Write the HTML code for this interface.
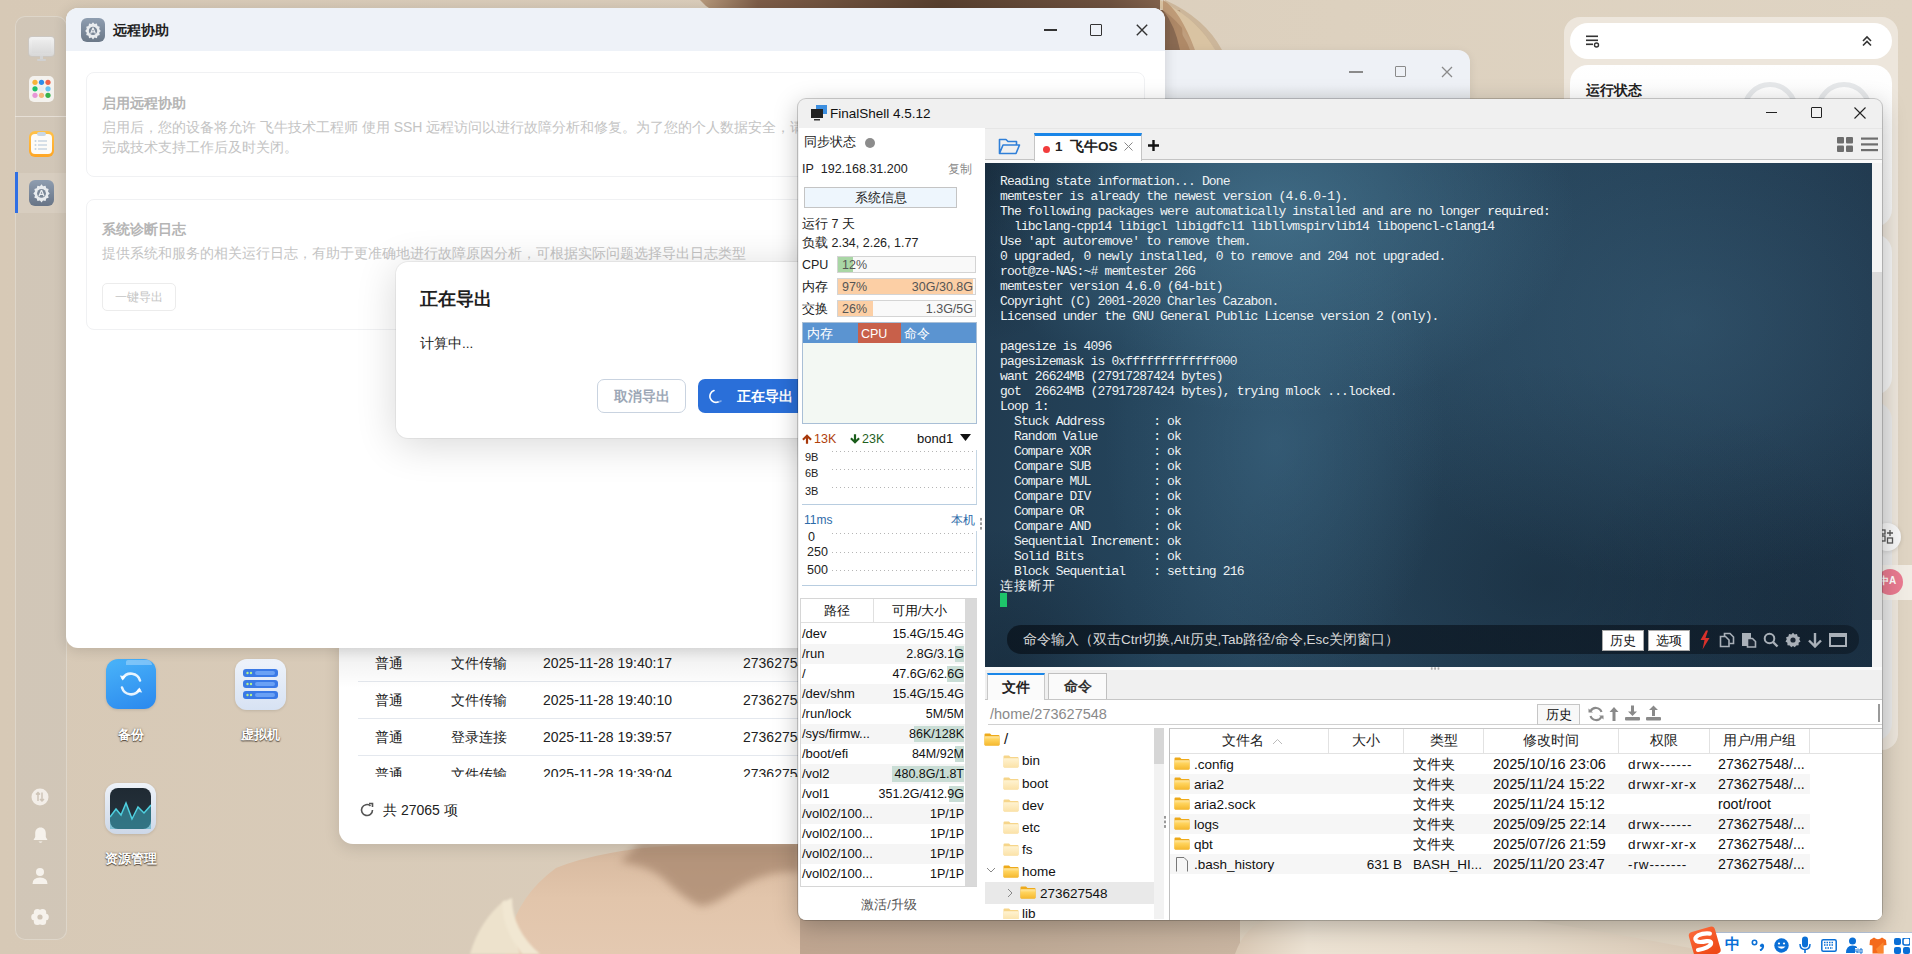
<!DOCTYPE html>
<html><head><meta charset="utf-8">
<style>
*{box-sizing:border-box}
html,body{margin:0;padding:0}
body{width:1912px;height:954px;overflow:hidden;position:relative;background:#d9cdbb;font-family:"Liberation Sans",sans-serif;color:#222}
.a{position:absolute}
.mono{font-family:"Liberation Mono",monospace}
</style></head><body>

<svg width="0" height="0" style="position:absolute"><defs>
<linearGradient id="fgF" x1="0" y1="0" x2="0" y2="1"><stop offset="0" stop-color="#ffe9a6"/><stop offset="0.35" stop-color="#ffd35c"/><stop offset="1" stop-color="#f5b82e"/></linearGradient>
<linearGradient id="fgL" x1="0" y1="0" x2="0" y2="1"><stop offset="0" stop-color="#fff3d2"/><stop offset="1" stop-color="#fbe2a8"/></linearGradient>
</defs></svg>
<!-- wallpaper -->
<div class="a" id="wp" style="left:0;top:0;width:1912px;height:954px;background:linear-gradient(90deg,#d7c9b6 0%,#dacdbb 40%,#ddd1bf 70%,#dfd4c3 100%)"></div>
<svg class="a" style="left:650px;top:0" width="620" height="60" viewBox="650 0 620 60">
<defs><linearGradient id="hr" x1="0" y1="0" x2="1" y2="0"><stop offset="0" stop-color="#b79a7c"/><stop offset="0.12" stop-color="#7d5d48"/><stop offset="0.5" stop-color="#58402f"/><stop offset="0.85" stop-color="#6e5240"/><stop offset="1" stop-color="#8a6a52"/></linearGradient></defs>
<path d="M700 0 Q705 6 712 10 L1180 10 Q1185 40 1180 55 H1160 V0 Z" fill="url(#hr)"/>
<path d="M1160 0 Q1200 20 1215 50 L1195 50 Q1185 25 1160 8 Z" fill="#d9c3a2"/>
<path d="M1165 0 Q1205 18 1222 50 L1215 50 Q1198 20 1165 3 Z" fill="#c4ab8a" opacity="0.7"/>
<path d="M1170 20 Q1185 35 1190 50 L1170 50 Z" fill="#8a6a52"/>
<path d="M1163 0 Q1180 10 1195 50 L1180 50 Q1175 25 1163 10 Z" fill="#b8916d" opacity="0.8"/>
</svg>
<!-- shoulder -->
<svg class="a" style="left:0;top:820px" width="1912" height="134" viewBox="0 820 1912 134">
<defs>
<linearGradient id="sk" x1="0" y1="0" x2="0" y2="1"><stop offset="0" stop-color="#d6b89e"/><stop offset="0.5" stop-color="#e2c5ab"/><stop offset="1" stop-color="#e4c9b1"/></linearGradient>
<linearGradient id="sk2" x1="0" y1="0" x2="1" y2="0"><stop offset="0" stop-color="#bfa590"/><stop offset="0.5" stop-color="#bea995"/><stop offset="1" stop-color="#c9b5a1"/></linearGradient>
<linearGradient id="cr" x1="0" y1="0" x2="1" y2="0"><stop offset="0" stop-color="#d9c8b4"/><stop offset="0.15" stop-color="#ece2d3"/><stop offset="0.6" stop-color="#e6dac9"/><stop offset="1" stop-color="#d8c8b5"/></linearGradient>
<filter id="bl" x="-20%" y="-50%" width="140%" height="200%"><feGaussianBlur stdDeviation="4"/></filter>
<filter id="bl2"><feGaussianBlur stdDeviation="1.2"/></filter>
</defs>
<path d="M505 954 Q512 900 556 868 Q600 850 680 845 L800 843 V954 Z" fill="url(#sk)"/>
<path d="M640 843 H800 V872 Q770 868 735 890 Q712 906 700 906 Q685 900 665 880 Q650 866 620 862 Z" fill="#a8876e" opacity="0.75" filter="url(#bl)"/>
<path d="M470 954 Q480 920 505 900 Q512 920 520 954 Z" fill="#ede2cc" filter="url(#bl2)"/>
<path d="M503 902 Q500 925 522 954 L540 954 Q512 930 512 898 Z" fill="#f1e7d2" filter="url(#bl2)"/>
<path d="M800 919 H1240 V954 H800 Z" fill="url(#sk2)"/>
<path d="M1235 954 Q1245 925 1270 919 L1520 919 Q1600 930 1720 954 Z" fill="url(#cr)"/>
</svg>

<!-- dock -->
<div class="a" id="dock" style="left:15px;top:16px;width:52px;height:924px;border-radius:10px;background:rgba(208,198,184,0.8);box-shadow:inset 0 0 0 1px rgba(238,232,224,0.45)"></div>
<div class="a" style="left:15px;top:116px;width:51px;height:1px;background:rgba(240,234,226,0.7)"></div>
<div class="a" style="left:16px;top:173px;width:50px;height:40px;background:rgba(226,218,206,0.35)"></div>
<!-- monitor -->
<div class="a" style="left:29px;top:37px;width:25px;height:19px;border-radius:3px;background:linear-gradient(180deg,#f3f3f3,#d8d8d8);box-shadow:0 0 0 1px rgba(200,200,200,0.6)"></div>
<div class="a" style="left:32px;top:40px;width:19px;height:13px;background:linear-gradient(180deg,#ececec,#dadada)"></div>
<div class="a" style="left:40px;top:56px;width:3px;height:3px;background:#d4d4d4"></div>
<div class="a" style="left:37px;top:59px;width:9px;height:2px;border-radius:1px;background:#d0d0d0"></div>
<!-- app grid -->
<div class="a" style="left:29px;top:76px;width:25px;height:26px;border-radius:5px;background:#f4f2ee"></div>
<svg class="a" style="left:32px;top:79px" width="19" height="20" viewBox="0 0 19 20"><circle cx="3" cy="3.3" r="2.6" fill="#f8b43a"/><circle cx="9.5" cy="3.3" r="2.6" fill="#2d8ceb"/><circle cx="16" cy="3.3" r="2.6" fill="#f0624a"/><circle cx="3" cy="9.8" r="2.6" fill="#1fc06a"/><circle cx="9.5" cy="9.8" r="2.6" fill="#e6edf4"/><circle cx="16" cy="9.8" r="2.6" fill="#69c3f2"/><circle cx="3" cy="16.3" r="2.6" fill="#e795d6"/><circle cx="9.5" cy="16.3" r="2.6" fill="#f2b77a"/><circle cx="16" cy="16.3" r="2.6" fill="#37b14a"/></svg>
<!-- notes -->
<div class="a" style="left:29px;top:131px;width:25px;height:26px;border-radius:6px;background:linear-gradient(180deg,#ffc24a,#ffa624)"></div>
<div class="a" style="left:31px;top:134px;width:21px;height:20px;border-radius:4px;background:#fdfbf7"></div>
<div class="a" style="left:37px;top:132px;width:9px;height:4px;border-radius:2px;background:#c9d7e4"></div>
<svg class="a" style="left:34px;top:139px" width="15" height="12" viewBox="0 0 15 12"><circle cx="1.5" cy="2" r="1" fill="#c5d3e0"/><circle cx="1.5" cy="6" r="1" fill="#c5d3e0"/><circle cx="1.5" cy="10" r="1" fill="#c5d3e0"/><rect x="4" y="1.3" width="9" height="1.4" fill="#c5d3e0"/><rect x="4" y="5.3" width="9" height="1.4" fill="#c5d3e0"/><rect x="4" y="9.3" width="9" height="1.4" fill="#c5d3e0"/></svg>
<!-- settings active -->
<div class="a" style="left:15px;top:172px;width:3px;height:41px;background:#2f6fe4"></div>
<div class="a" style="left:29px;top:180px;width:25px;height:26px;border-radius:6px;background:linear-gradient(180deg,#8e9db0,#677486)"></div>
<svg class="a" style="left:31px;top:182px" width="21" height="21" viewBox="0 0 20 20"><path d="M10 2.2L11.5 4.1L13.9 3.5L14.5 5.9L16.8 6.7L16.2 9.1L17.8 10.9L16.2 12.7L16.8 15L14.5 15.8L13.9 18.2L11.5 17.6L10 19.5L8.5 17.6L6.1 18.2L5.5 15.8L3.2 15L3.8 12.7L2.2 10.9L3.8 9.1L3.2 6.7L5.5 5.9L6.1 3.5L8.5 4.1Z" fill="#e9ecef"/><circle cx="10" cy="10.9" r="4.2" fill="#7a8797"/><path d="M10 7.6L7.6 13.6M10 7.6L12.4 13.6M8.4 11.8H11.6" stroke="#e9ecef" stroke-width="1.2" fill="none"/></svg>
<!-- bottom dock icons -->
<svg class="a" style="left:31px;top:788px" width="18" height="18" viewBox="0 0 18 18"><circle cx="9" cy="9" r="8.5" fill="#f3eee8"/><path d="M7 4.5V13M5 6.5L7 4.5L9 6.5M11 4.5V13M9 11L11 13L13 11" stroke="#cfc5b8" stroke-width="1.5" fill="none"/></svg>
<svg class="a" style="left:32px;top:826px" width="17" height="19" viewBox="0 0 17 19"><path d="M8.5 1.5C5 1.5 3.2 4 3.2 7.5V11L1.5 14H15.5L13.8 11V7.5C13.8 4 12 1.5 8.5 1.5Z" fill="#f6f2ec"/><path d="M6.5 15.5Q8.5 18 10.5 15.5" fill="#f6f2ec"/></svg>
<svg class="a" style="left:32px;top:867px" width="16" height="18" viewBox="0 0 16 18"><circle cx="8" cy="5" r="4" fill="#f6f2ec"/><path d="M0.5 17Q0.5 10.5 8 10.5Q15.5 10.5 15.5 17Z" fill="#f6f2ec"/></svg>
<svg class="a" style="left:31px;top:908px" width="18" height="18" viewBox="0 0 18 18"><circle cx="14.20" cy="9.00" r="3.6" fill="#f6f2ec"/><circle cx="11.60" cy="13.50" r="3.6" fill="#f6f2ec"/><circle cx="6.40" cy="13.50" r="3.6" fill="#f6f2ec"/><circle cx="3.80" cy="9.00" r="3.6" fill="#f6f2ec"/><circle cx="6.40" cy="4.50" r="3.6" fill="#f6f2ec"/><circle cx="11.60" cy="4.50" r="3.6" fill="#f6f2ec"/><circle cx="9" cy="9" r="5.5" fill="#f6f2ec"/><circle cx="9" cy="9" r="2.6" fill="#d0c5b7"/></svg>

<!-- desktop icons -->
<div class="a" style="left:106px;top:659px;width:50px;height:50px;border-radius:12px;background:linear-gradient(160deg,#4ab4f9,#2a88ee);box-shadow:0 1px 3px rgba(0,0,0,0.12)"></div>
<div class="a" style="left:126px;top:660px;width:26px;height:5px;border-radius:3px 8px 0 0;background:rgba(255,255,255,0.3)"></div>
<svg class="a" style="left:116px;top:669px" width="30" height="30" viewBox="0 0 30 30"><path d="M24 11.5A9.5 9.5 0 0 0 6.8 9.2" fill="none" stroke="rgba(255,255,255,0.88)" stroke-width="2.6" stroke-linecap="round"/><path d="M6 18.5A9.5 9.5 0 0 0 23.2 20.8" fill="none" stroke="rgba(255,255,255,0.88)" stroke-width="2.6" stroke-linecap="round"/><path d="M3.8 6.5L6.5 11.5L10 7.2Z" fill="rgba(255,255,255,0.88)"/><path d="M26.2 23.5L23.5 18.5L20 22.8Z" fill="rgba(255,255,255,0.88)"/></svg>
<div class="a" style="left:100px;top:726px;width:61px;text-align:center;font-size:13px;line-height:18px;font-weight:bold;color:#fff;text-shadow:0 1px 1px rgba(40,30,20,0.7),0 0 2px rgba(40,30,20,0.55)">备份</div>

<div class="a" style="left:235px;top:659px;width:51px;height:51px;border-radius:12px;background:linear-gradient(180deg,#eef3fb,#d7e2f3);box-shadow:0 1px 3px rgba(0,0,0,0.12)"></div>
<svg class="a" style="left:242px;top:668px" width="37" height="32" viewBox="0 0 37 32"><rect x="1" y="1" width="35" height="8" rx="3" fill="#3a79e6"/><rect x="1" y="12" width="35" height="8" rx="3" fill="#3a79e6"/><rect x="1" y="23" width="35" height="8" rx="3" fill="#3a79e6"/><circle cx="5.5" cy="5" r="1.2" fill="#b7f28a"/><circle cx="9" cy="5" r="1.2" fill="#b7f28a"/><circle cx="5.5" cy="16" r="1.2" fill="#b7f28a"/><circle cx="9" cy="16" r="1.2" fill="#b7f28a"/><circle cx="5.5" cy="27" r="1.2" fill="#b7f28a"/><circle cx="9" cy="27" r="1.2" fill="#b7f28a"/><rect x="13" y="3" width="20" height="4" rx="2" fill="#6aa1f5"/><rect x="13" y="14" width="20" height="4" rx="2" fill="#6aa1f5"/><rect x="13" y="25" width="20" height="4" rx="2" fill="#6aa1f5"/></svg>
<div class="a" style="left:225px;top:726px;width:71px;text-align:center;font-size:13px;line-height:18px;font-weight:bold;color:#fff;text-shadow:0 1px 1px rgba(40,30,20,0.7),0 0 2px rgba(40,30,20,0.55)">虚拟机</div>

<div class="a" style="left:105px;top:783px;width:51px;height:51px;border-radius:12px;background:linear-gradient(180deg,#eef2f8,#cdd8e8);box-shadow:0 1px 3px rgba(0,0,0,0.12)"></div>
<div class="a" style="left:110px;top:788px;width:41px;height:41px;border-radius:8px;background:linear-gradient(180deg,#1f2a33,#27343e)"></div>
<svg class="a" style="left:110px;top:795px" width="41" height="34" viewBox="0 0 41 34"><path d="M0 22L6 14L11 20L16 8L22 24L28 12L34 18L41 10V34H0Z" fill="rgba(60,170,190,0.55)"/><path d="M0 22L6 14L11 20L16 8L22 24L28 12L34 18L41 10" fill="none" stroke="#4fd0e0" stroke-width="1.5"/></svg>
<div class="a" style="left:95px;top:850px;width:71px;text-align:center;font-size:13px;line-height:18px;font-weight:bold;color:#fff;text-shadow:0 1px 1px rgba(40,30,20,0.7),0 0 2px rgba(40,30,20,0.55)">资源管理</div>

<!-- widget panel -->
<div class="a" id="widget" style="left:1564px;top:17px;width:334px;height:733px;border-radius:16px;background:rgba(238,231,222,0.92)"></div>
<div class="a" style="left:1570px;top:23px;width:322px;height:36px;border-radius:18px;background:#fff"></div>
<svg class="a" style="left:1586px;top:35px" width="14" height="13" viewBox="0 0 14 13"><rect x="0" y="0.5" width="12" height="1.6" fill="#333"/><rect x="0" y="4.5" width="12" height="1.6" fill="#333"/><rect x="0" y="8.5" width="7" height="1.6" fill="#333"/><circle cx="10.5" cy="10" r="2" fill="none" stroke="#333" stroke-width="1.4"/></svg>
<svg class="a" style="left:1861px;top:35px" width="12" height="12" viewBox="0 0 12 12"><path d="M2 6L6 2L10 6M2 10.5L6 6.5L10 10.5" fill="none" stroke="#333" stroke-width="1.6"/></svg>
<div class="a" style="left:1570px;top:65px;width:322px;height:162px;border-radius:18px;background:linear-gradient(180deg,#fff,#f4f4f4)"></div>
<div class="a" style="left:1586px;top:81px;font-size:14px;line-height:18px;font-weight:bold;color:#222">运行状态</div>
<div class="a" style="left:1742px;top:82px;width:56px;height:56px;border-radius:50%;border:5px solid #e6e8ea"></div>
<div class="a" style="left:1816px;top:82px;width:56px;height:56px;border-radius:50%;border:5px solid #e6e8ea"></div>
<div class="a" style="left:1570px;top:234px;width:322px;height:161px;border-radius:18px;background:#f4f4f4"></div>
<div class="a" style="left:1570px;top:402px;width:322px;height:339px;border-radius:18px;background:#e9e9e9"></div>
<div class="a" style="left:1873px;top:523px;width:28px;height:28px;border-radius:50%;background:#f7f7f7;box-shadow:0 1px 4px rgba(0,0,0,0.12)"></div>
<svg class="a" style="left:1879px;top:529px" width="16" height="16" viewBox="0 0 16 16"><rect x="1" y="7" width="5" height="5" fill="none" stroke="#555" stroke-width="1.3"/><rect x="8.5" y="9" width="5" height="5" fill="none" stroke="#555" stroke-width="1.3"/><rect x="1" y="1" width="5" height="4" fill="none" stroke="#555" stroke-width="1.3"/><path d="M11 1V7M8 4H14" stroke="#555" stroke-width="1.3"/></svg>
<div class="a" style="left:1860px;top:565px;width:52px;height:35px;background:rgba(245,240,234,0.85)"></div>
<div class="a" style="left:1877px;top:569px;width:26px;height:26px;border-radius:50%;background:#e97a90"></div>
<div class="a" style="left:1879px;top:574px;font-size:10px;line-height:14px;color:#fff;font-weight:bold">中A</div>

<!-- back window -->
<div class="a" id="backwin" style="left:1100px;top:50px;width:370px;height:50px;border-radius:12px 12px 0 0;background:linear-gradient(180deg,#eef1f6 0%,#eef1f6 70%,#e3e6ea 100%);box-shadow:0 2px 10px rgba(0,0,0,0.08)"></div>
<div class="a" style="left:1349px;top:71px;width:14px;height:1.5px;background:#8a8a8a"></div>
<div class="a" style="left:1395px;top:66px;width:11px;height:11px;border:1.3px solid #8a8a8a;border-radius:1px"></div>
<svg class="a" style="left:1441px;top:66px" width="12" height="12" viewBox="0 0 12 12"><path d="M1 1L11 11M11 1L1 11" stroke="#8a8a8a" stroke-width="1.3"/></svg>

<!-- log window -->
<div class="a" id="logwin" style="left:339px;top:560px;width:520px;height:284px;border-radius:0 0 14px 14px;background:#fff;box-shadow:0 4px 16px rgba(0,0,0,0.12)"></div>
<div class="a" style="left:339px;top:648px;width:520px;height:129px;overflow:hidden">
<div class="a" style="left:36px;top:6px;font-size:14px;line-height:18px;color:#222">普通</div><div class="a" style="left:112px;top:6px;font-size:14px;line-height:18px;color:#222">文件传输</div><div class="a" style="left:204px;top:6px;font-size:14px;line-height:18px;color:#222">2025-11-28 19:40:17</div><div class="a" style="left:404px;top:6px;font-size:14px;line-height:18px;color:#222">27362754</div>
<div class="a" style="left:19px;top:33px;width:500px;height:1px;background:#e4e8ee"></div>
<div class="a" style="left:36px;top:43px;font-size:14px;line-height:18px;color:#222">普通</div><div class="a" style="left:112px;top:43px;font-size:14px;line-height:18px;color:#222">文件传输</div><div class="a" style="left:204px;top:43px;font-size:14px;line-height:18px;color:#222">2025-11-28 19:40:10</div><div class="a" style="left:404px;top:43px;font-size:14px;line-height:18px;color:#222">27362754</div>
<div class="a" style="left:19px;top:70px;width:500px;height:1px;background:#e4e8ee"></div>
<div class="a" style="left:36px;top:80px;font-size:14px;line-height:18px;color:#222">普通</div><div class="a" style="left:112px;top:80px;font-size:14px;line-height:18px;color:#222">登录连接</div><div class="a" style="left:204px;top:80px;font-size:14px;line-height:18px;color:#222">2025-11-28 19:39:57</div><div class="a" style="left:404px;top:80px;font-size:14px;line-height:18px;color:#222">27362754</div>
<div class="a" style="left:19px;top:107px;width:500px;height:1px;background:#e4e8ee"></div>
<div class="a" style="left:36px;top:117px;font-size:14px;line-height:18px;color:#222">普通</div><div class="a" style="left:112px;top:117px;font-size:14px;line-height:18px;color:#222">文件传输</div><div class="a" style="left:204px;top:117px;font-size:14px;line-height:18px;color:#222">2025-11-28 19:39:04</div><div class="a" style="left:404px;top:117px;font-size:14px;line-height:18px;color:#222">27362754</div>
</div>
<div class="a" style="left:339px;top:648px;width:520px;height:40px;background:linear-gradient(180deg,rgba(0,0,0,0.07),rgba(0,0,0,0) 100%)"></div>
<svg class="a" style="left:359px;top:802px" width="16" height="16" viewBox="0 0 16 16"><path d="M13.5 8A5.5 5.5 0 1 1 11.5 3.8" fill="none" stroke="#555" stroke-width="1.6"/><path d="M10 1.5L13.5 1.5L13.5 5" fill="none" stroke="#555" stroke-width="1.6"/></svg>
<div class="a" style="left:383px;top:801px;font-size:14px;line-height:18px;color:#222">共 27065 项</div>

<!-- remote assist window -->
<div class="a" id="remote" style="left:66px;top:8px;width:1099px;height:640px;border-radius:12px;background:#fff;overflow:hidden;box-shadow:0 2px 14px rgba(0,0,0,0.14)">
  <div class="a" style="left:0;top:0;width:100%;height:43px;background:#eef2f8"></div>
  <div class="a" style="left:15px;top:10px;width:24px;height:24px;border-radius:6px;background:linear-gradient(180deg,#8e9db0,#6b7888)"></div>
  <svg class="a" style="left:17px;top:12px" width="20" height="20" viewBox="0 0 20 20"><path d="M10 2.2L11.5 4.1L13.9 3.5L14.5 5.9L16.8 6.7L16.2 9.1L17.8 10.9L16.2 12.7L16.8 15L14.5 15.8L13.9 18.2L11.5 17.6L10 19.5L8.5 17.6L6.1 18.2L5.5 15.8L3.2 15L3.8 12.7L2.2 10.9L3.8 9.1L3.2 6.7L5.5 5.9L6.1 3.5L8.5 4.1Z" fill="#e9ecef"/><circle cx="10" cy="10.9" r="4.2" fill="#7a8797"/><path d="M10 7.6L7.6 13.6M10 7.6L12.4 13.6M8.4 11.8H11.6" stroke="#e9ecef" stroke-width="1.2" fill="none"/></svg>
  <div class="a" style="left:47px;top:13px;font-size:14px;line-height:18px;font-weight:bold;color:#222">远程协助</div>
  <div class="a" style="left:978px;top:21px;width:13px;height:1.5px;background:#333"></div>
  <div class="a" style="left:1024px;top:16px;width:12px;height:12px;border:1.4px solid #333;border-radius:1px"></div>
  <svg class="a" style="left:1070px;top:16px" width="12" height="12" viewBox="0 0 12 12"><path d="M0.8 0.8L11.2 11.2M11.2 0.8L0.8 11.2" stroke="#333" stroke-width="1.4"/></svg>

  <div class="a" style="left:20px;top:64px;width:1059px;height:105px;border:1px solid #f0f1f3;border-radius:8px"></div>
  <div class="a" style="left:36px;top:86px;font-size:14px;line-height:18px;font-weight:bold;color:#b5b5b5">启用远程协助</div>
  <div class="a" style="left:36px;top:109px;font-size:14px;line-height:20px;color:#c4c4c4;width:1040px">启用后，您的设备将允许 飞牛技术工程师 使用 SSH 远程访问以进行故障分析和修复。为了您的个人数据安全，请在技术支持工作结束后及时关闭远程协助功能，并在<br>完成技术支持工作后及时关闭。</div>
  <div class="a" style="left:20px;top:191px;width:1059px;height:131px;border:1px solid #f0f1f3;border-radius:8px"></div>
  <div class="a" style="left:36px;top:212px;font-size:14px;line-height:18px;font-weight:bold;color:#b5b5b5">系统诊断日志</div>
  <div class="a" style="left:36px;top:235px;font-size:14px;line-height:20px;color:#c4c4c4">提供系统和服务的相关运行日志，有助于更准确地进行故障原因分析，可根据实际问题选择导出日志类型</div>
  <div class="a" style="left:36px;top:275px;width:74px;height:28px;border:1px solid #ececec;border-radius:5px;font-size:12px;line-height:26px;text-align:center;color:#c4c4c4">一键导出</div>
</div>

<!-- modal -->
<div class="a" style="left:396px;top:262px;width:520px;height:176px;border-radius:12px;background:#fff;box-shadow:0 6px 40px rgba(0,0,0,0.16),0 0 0 1px rgba(0,0,0,0.05)"></div>
<div class="a" style="left:420px;top:288px;font-size:18px;line-height:22px;font-weight:bold;color:#1f1f1f">正在导出</div>
<div class="a" style="left:420px;top:335px;font-size:13.5px;line-height:18px;color:#222">计算中...</div>
<div class="a" style="left:597px;top:379px;width:89px;height:34px;border:1px solid #c9d3e0;border-radius:7px;font-size:14px;line-height:32px;text-align:center;font-weight:bold;color:#9ca7b6">取消导出</div>
<div class="a" style="left:698px;top:379px;width:120px;height:34px;border-radius:7px;background:#2a6fd9"></div>
<svg class="a" style="left:709px;top:388px" width="16" height="16" viewBox="0 0 16 16"><path d="M5 2.5A6 6 0 0 0 9 14" fill="none" stroke="#fff" stroke-width="1.6" stroke-linecap="round"/><path d="M9 14A6 6 0 0 0 12 13" fill="none" stroke="rgba(255,255,255,0.4)" stroke-width="1.6" stroke-linecap="round"/></svg>
<div class="a" style="left:737px;top:387px;font-size:14px;line-height:18px;font-weight:bold;color:#fff">正在导出</div>

<!-- FinalShell -->
<div class="a" id="fs" style="left:798px;top:99px;width:1084px;height:821px;border-radius:8px;background:#f0f0f0;overflow:hidden;box-shadow:0 0 0 1px rgba(0,0,0,0.18),0 6px 24px rgba(0,0,0,0.25)"></div>
<div class="a" style="left:810px;top:105px;width:18px;height:16px">
  <svg width="18" height="16" viewBox="0 0 18 16"><rect x="6" y="0" width="11" height="9" fill="#3d8fe0"/><rect x="1" y="4" width="12" height="9" fill="#222"/><rect x="4" y="14" width="6" height="1.5" fill="#333"/></svg>
</div>
<div class="a" style="left:830px;top:106px;font-size:13.5px;line-height:16px;color:#111">FinalShell 4.5.12</div>
<div class="a" style="left:1766px;top:112px;width:11px;height:1px;background:#222"></div>
<div class="a" style="left:1811px;top:107px;width:11px;height:11px;border:1px solid #222;border-radius:1px"></div>
<svg class="a" style="left:1854px;top:107px" width="12" height="12" viewBox="0 0 12 12"><path d="M0.5 0.5L11.5 11.5M11.5 0.5L0.5 11.5" stroke="#222" stroke-width="1.1"/></svg>

<!-- left panel -->
<div class="a" style="left:799px;top:128px;width:186px;height:792px;background:#fff;border-bottom-left-radius:7px"></div>
<div class="a" style="left:804px;top:134px;font-size:13px;line-height:16px">同步状态</div>
<div class="a" style="left:865px;top:138px;width:10px;height:10px;border-radius:50%;background:#8c8c8c"></div>
<div class="a" style="left:802px;top:161px;font-size:12.5px;line-height:16px">IP&nbsp; 192.168.31.200</div>
<div class="a" style="left:948px;top:161px;font-size:12px;line-height:16px;color:#8a8a8a">复制</div>
<div class="a" style="left:804px;top:187px;width:153px;height:21px;background:#eef6fd;border:1px solid #c4c4c4;font-size:13px;line-height:19px;text-align:center">系统信息</div>
<div class="a" style="left:802px;top:216px;font-size:12.5px;line-height:16px">运行 7 天</div>
<div class="a" style="left:802px;top:235px;font-size:12.5px;line-height:16px">负载 2.34, 2.26, 1.77</div>

<div class="a" style="left:802px;top:257px;font-size:12.5px;line-height:16px">CPU</div>
<div class="a" style="left:837px;top:256px;width:139px;height:17px;border:1px solid #d4d4d4;background:#f9f9f9"></div>
<div class="a" style="left:838px;top:257px;width:15px;height:15px;background:#a9d6a5"></div>
<div class="a" style="left:842px;top:257px;font-size:12.5px;line-height:17px;color:#555">12%</div>

<div class="a" style="left:802px;top:279px;font-size:12.5px;line-height:16px">内存</div>
<div class="a" style="left:837px;top:278px;width:139px;height:17px;border:1px solid #d4d4d4;background:#f9f9f9"></div>
<div class="a" style="left:838px;top:279px;width:135px;height:15px;background:#fccfa5"></div>
<div class="a" style="left:842px;top:279px;font-size:12.5px;line-height:17px;color:#555">97%</div>
<div class="a" style="left:837px;top:279px;width:136px;font-size:12.5px;line-height:17px;color:#555;text-align:right">30G/30.8G</div>

<div class="a" style="left:802px;top:301px;font-size:12.5px;line-height:16px">交换</div>
<div class="a" style="left:837px;top:300px;width:139px;height:17px;border:1px solid #d4d4d4;background:#f9f9f9"></div>
<div class="a" style="left:838px;top:301px;width:35px;height:15px;background:#fccfa5"></div>
<div class="a" style="left:842px;top:301px;font-size:12.5px;line-height:17px;color:#555">26%</div>
<div class="a" style="left:837px;top:301px;width:136px;font-size:12.5px;line-height:17px;color:#555;text-align:right">1.3G/5G</div>

<div class="a" style="left:802px;top:322px;width:175px;height:102px;border:1px solid #a9bfd6;background:#f3f8f3"></div>
<div class="a" style="left:803px;top:323px;width:173px;height:20px;background:#5b94d1"></div>
<div class="a" style="left:858px;top:323px;width:43px;height:20px;background:#c8604a"></div>
<div class="a" style="left:807px;top:324px;font-size:12.5px;line-height:20px;color:#fff">内存</div>
<div class="a" style="left:861px;top:324px;font-size:12.5px;line-height:20px;color:#fff">CPU</div>
<div class="a" style="left:904px;top:324px;font-size:12.5px;line-height:20px;color:#fff">命令</div>

<svg class="a" style="left:802px;top:434px" width="10" height="10" viewBox="0 0 10 10"><path d="M5 0.3L9.8 5.1L8.4 6.5L6.1 4.2V9.7H3.9V4.2L1.6 6.5L0.2 5.1Z" fill="#a8380a"/></svg>
<div class="a" style="left:814px;top:431px;font-size:12.5px;line-height:16px;color:#b0400c">13K</div>
<svg class="a" style="left:850px;top:434px" width="10" height="10" viewBox="0 0 10 10"><path d="M5 9.7L9.8 4.9L8.4 3.5L6.1 5.8V0.3H3.9V5.8L1.6 3.5L0.2 4.9Z" fill="#1a5c1a"/></svg>
<div class="a" style="left:862px;top:431px;font-size:12.5px;line-height:16px;color:#1f5f1f">23K</div>
<div class="a" style="left:917px;top:431px;font-size:13px;line-height:16px;color:#111">bond1</div>
<svg class="a" style="left:960px;top:434px" width="11" height="7" viewBox="0 0 11 7"><path d="M0 0H11L5.5 7Z" fill="#111"/></svg>

<div class="a" style="left:802px;top:450px;width:175px;height:55px;border-right:1px solid #c5d6e4;border-bottom:1px solid #b8cde0"></div>
<div class="a" style="left:832px;top:451px;width:142px;height:1px;background:repeating-linear-gradient(90deg,#b5b5b5 0,#b5b5b5 1px,transparent 1px,transparent 4px)"></div>
<div class="a" style="left:832px;top:469px;width:142px;height:1px;background:repeating-linear-gradient(90deg,#b5b5b5 0,#b5b5b5 1px,transparent 1px,transparent 4px)"></div>
<div class="a" style="left:832px;top:487px;width:142px;height:1px;background:repeating-linear-gradient(90deg,#b5b5b5 0,#b5b5b5 1px,transparent 1px,transparent 4px)"></div>
<div class="a" style="left:805px;top:450px;font-size:11px;line-height:14px;color:#222">9B</div>
<div class="a" style="left:805px;top:466px;font-size:11px;line-height:14px;color:#222">6B</div>
<div class="a" style="left:805px;top:484px;font-size:11px;line-height:14px;color:#222">3B</div>

<div class="a" style="left:804px;top:513px;font-size:12px;line-height:15px;color:#2c6aa8">11ms</div>
<div class="a" style="left:951px;top:513px;font-size:12px;line-height:15px;color:#2c6aa8">本机</div>
<div class="a" style="left:979px;top:517px;width:4px;height:14px;background:radial-gradient(circle,#9a9a9a 1.2px,transparent 1.5px) 0 0/4px 4.5px"></div>
<div class="a" style="left:802px;top:531px;width:175px;height:55px;border-right:1px solid #c5d6e4;border-bottom:1px solid #b8cde0"></div>
<div class="a" style="left:832px;top:533px;width:142px;height:1px;background:repeating-linear-gradient(90deg,#b5b5b5 0,#b5b5b5 1px,transparent 1px,transparent 4px)"></div>
<div class="a" style="left:832px;top:552px;width:142px;height:1px;background:repeating-linear-gradient(90deg,#b5b5b5 0,#b5b5b5 1px,transparent 1px,transparent 4px)"></div>
<div class="a" style="left:832px;top:570px;width:142px;height:1px;background:repeating-linear-gradient(90deg,#b5b5b5 0,#b5b5b5 1px,transparent 1px,transparent 4px)"></div>
<div class="a" style="left:808px;top:529px;font-size:12.5px;line-height:16px;color:#222">0</div>
<div class="a" style="left:807px;top:544px;font-size:12.5px;line-height:16px;color:#222">250</div>
<div class="a" style="left:807px;top:562px;font-size:12.5px;line-height:16px;color:#222">500</div>

<!-- tab bar -->
<div class="a" style="left:985px;top:128px;width:897px;height:1px;background:#e6e6e6"></div><div class="a" style="left:985px;top:159px;width:897px;height:1px;background:#c4c4c4"></div><div class="a" style="left:985px;top:160px;width:897px;height:3px;background:#fafafa"></div>
<svg class="a" style="left:998px;top:137px" width="23" height="18" viewBox="0 0 23 18"><path d="M1.5 16.5V2.5H8L10 4.5H18.5V7.5M1.5 16.5L5 8H21.5L18 16.5Z" fill="none" stroke="#2f7fd8" stroke-width="1.6" stroke-linejoin="round"/></svg>
<div class="a" style="left:1034px;top:133px;width:108px;height:28px;background:#fff;border:1px solid #c4c4c4;border-top:3px solid #1a86e8;border-bottom:none"></div>
<div class="a" style="left:1043px;top:146px;width:7px;height:7px;border-radius:50%;background:#f23c3c"></div>
<div class="a" style="left:1055px;top:138px;font-size:13.5px;line-height:18px;font-weight:bold;color:#222">1&nbsp; 飞牛OS</div>
<svg class="a" style="left:1124px;top:142px" width="9" height="9" viewBox="0 0 9 9"><path d="M0.5 0.5L8.5 8.5M8.5 0.5L0.5 8.5" stroke="#888" stroke-width="1"/></svg>
<svg class="a" style="left:1147px;top:139px" width="13" height="13" viewBox="0 0 13 13"><path d="M6.5 1V12M1 6.5H12" stroke="#111" stroke-width="2.4"/></svg>
<svg class="a" style="left:1837px;top:137px" width="16" height="15" viewBox="0 0 16 15"><rect x="0" y="0" width="7" height="6.5" rx="1" fill="#6e6e6e"/><rect x="9" y="0" width="7" height="6.5" rx="1" fill="#6e6e6e"/><rect x="0" y="8.5" width="7" height="6.5" rx="1" fill="#6e6e6e"/><rect x="9" y="8.5" width="7" height="6.5" rx="1" fill="#6e6e6e"/></svg>
<svg class="a" style="left:1861px;top:137px" width="17" height="15" viewBox="0 0 17 15"><rect x="0" y="0.5" width="17" height="2.2" fill="#6e6e6e"/><rect x="0" y="6.3" width="17" height="2.2" fill="#6e6e6e"/><rect x="0" y="12" width="17" height="2.2" fill="#6e6e6e"/></svg>

<!-- terminal -->
<div class="a" id="term" style="left:985px;top:163px;width:887px;height:504px;background:
radial-gradient(ellipse 300px 200px at 290px 50px,rgba(80,132,160,0.6),rgba(80,132,160,0) 100%),
radial-gradient(ellipse 170px 250px at 290px 280px,rgba(70,118,148,0.42),rgba(70,118,148,0) 100%),
radial-gradient(ellipse 340px 260px at 700px 160px,rgba(70,112,140,0.34),rgba(70,112,140,0) 100%),
radial-gradient(ellipse 320px 220px at 560px 420px,rgba(12,24,36,0.35),rgba(12,24,36,0) 100%),
radial-gradient(ellipse 260px 220px at 840px 460px,rgba(12,24,36,0.3),rgba(12,24,36,0) 100%),
radial-gradient(ellipse 140px 180px at 0px 0px,rgba(12,24,36,0.4),rgba(12,24,36,0) 100%),
radial-gradient(ellipse 160px 140px at 20px 504px,rgba(12,24,36,0.35),rgba(12,24,36,0) 100%),
linear-gradient(90deg,#213b50 0%,#24435a 16%,#28475e 45%,#233f55 75%,#1f374c 100%)"></div>
<pre class="a mono" style="left:1000px;top:174px;margin:0;font-size:13px;line-height:15px;letter-spacing:-0.84px;color:#eef2f4">Reading state information... Done
memtester is already the newest version (4.6.0-1).
The following packages were automatically installed and are no longer required:
  libclang-cpp14 libigcl libigdfcl1 libllvmspirvlib14 libopencl-clang14
Use &#x27;apt autoremove&#x27; to remove them.
0 upgraded, 0 newly installed, 0 to remove and 204 not upgraded.
root@ze-NAS:~# memtester 26G
memtester version 4.6.0 (64-bit)
Copyright (C) 2001-2020 Charles Cazabon.
Licensed under the GNU General Public License version 2 (only).

pagesize is 4096
pagesizemask is 0xfffffffffffff000
want 26624MB (27917287424 bytes)
got  26624MB (27917287424 bytes), trying mlock ...locked.
Loop 1:
  Stuck Address       : ok
  Random Value        : ok
  Compare XOR         : ok
  Compare SUB         : ok
  Compare MUL         : ok
  Compare DIV         : ok
  Compare OR          : ok
  Compare AND         : ok
  Sequential Increment: ok
  Solid Bits          : ok
  Block Sequential    : setting 216</pre>
<div class="a" style="left:1000px;top:578px;font-size:13px;line-height:15px;letter-spacing:1px;color:#eef2f4">连接断开</div>
<div class="a" style="left:1000px;top:593px;width:7px;height:14px;background:#1ec46a"></div>
<div class="a" style="left:1872px;top:163px;width:10px;height:504px;background:#f4f4f4"></div>
<div class="a" style="left:1872px;top:272px;width:10px;height:348px;background:#dadada"></div>

<!-- command bar -->
<div class="a" style="left:1007px;top:625px;width:852px;height:29px;border-radius:14px;background:linear-gradient(90deg,rgba(10,20,30,0.8),rgba(14,26,38,0.7))"></div>
<div class="a" style="left:1023px;top:632px;font-size:13.5px;line-height:16px;color:#d8d8d8;white-space:nowrap">命令输入（双击Ctrl切换,Alt历史,Tab路径/命令,Esc关闭窗口）</div>
<div class="a" style="left:1602px;top:630px;width:42px;height:21px;background:#fff;border:1px solid #aaa;font-size:13px;line-height:19px;text-align:center;color:#111">历史</div>
<div class="a" style="left:1648px;top:630px;width:42px;height:21px;background:#fff;border:1px solid #aaa;font-size:13px;line-height:19px;text-align:center;color:#111">选项</div>

<!-- cmd icons -->
<svg class="a" style="left:1699px;top:630px" width="12" height="20" viewBox="0 0 12 20"><path d="M7 0.5L1.5 10H5.5L3.5 19.5L10.5 8H6.5L9 0.5Z" fill="#d8312b"/></svg>
<svg class="a" style="left:1719px;top:632px" width="16" height="16" viewBox="0 0 16 16"><path d="M5.5 4.5V1.5H11L14.5 5V11.5H10.5" fill="none" stroke="#a9b0b8" stroke-width="1.6"/><path d="M1.5 4.5H6.5L10 8V14.5H1.5Z" fill="none" stroke="#a9b0b8" stroke-width="1.6"/></svg>
<svg class="a" style="left:1741px;top:632px" width="16" height="16" viewBox="0 0 16 16"><rect x="1" y="1" width="9" height="13" fill="#a9b0b8"/><path d="M6.5 6.5H11.5L14.5 9.5V15H6.5Z" fill="#1b2633" stroke="#a9b0b8" stroke-width="1.6"/></svg>
<svg class="a" style="left:1763px;top:632px" width="16" height="16" viewBox="0 0 16 16"><circle cx="6.5" cy="6.5" r="4.8" fill="none" stroke="#a9b0b8" stroke-width="2"/><path d="M10 10L14.5 14.5" stroke="#a9b0b8" stroke-width="2.4"/></svg>
<svg class="a" style="left:1785px;top:632px" width="16" height="16" viewBox="0 0 16 16"><path d="M8 0.8L9.6 2.6L12 2.1L12.6 4.4L14.9 5.2L14.3 7.5L15.5 9.4L13.6 10.8L13.6 13.2L11.2 13.4L9.8 15.3L8 14L6.2 15.3L4.8 13.4L2.4 13.2L2.4 10.8L0.5 9.4L1.7 7.5L1.1 5.2L3.4 4.4L4 2.1L6.4 2.6Z" fill="#a9b0b8"/><circle cx="8" cy="8" r="2.6" fill="#1b2633"/></svg>
<svg class="a" style="left:1807px;top:632px" width="16" height="16" viewBox="0 0 16 16"><path d="M8 1V14M2 8.5L8 14.5L14 8.5" fill="none" stroke="#a9b0b8" stroke-width="2.4"/></svg>
<svg class="a" style="left:1829px;top:632px" width="18" height="16" viewBox="0 0 18 16"><rect x="1" y="2" width="16" height="12" fill="none" stroke="#a9b0b8" stroke-width="2"/><rect x="1" y="2" width="16" height="3" fill="#a9b0b8"/></svg>

<!-- file manager -->
<div class="a" style="left:799px;top:667px;width:1083px;height:0"></div>
<div class="a" style="left:985px;top:667px;width:897px;height:3px;background:#fafafa"></div><div class="a" style="left:985px;top:670px;width:897px;height:30px;background:#f0f0f0"></div>
<div class="a" style="left:1430px;top:667px;width:10px;height:3px;background:radial-gradient(circle,#aaa 1px,transparent 1.3px) 0 0/3.4px 3px"></div>
<div class="a" style="left:985px;top:699px;width:897px;height:1px;background:#c6c6c6"></div>
<div class="a" style="left:987px;top:673px;width:58px;height:27px;background:#fbfbfb;border:1px solid #c8c8c8;border-top:2px solid #1a86e8;border-bottom:none;font-size:13.5px;line-height:26px;text-align:center;font-weight:bold;color:#222">文件</div>
<div class="a" style="left:1048px;top:673px;width:59px;height:26px;background:#fafafa;border:1px solid #c0c0c0;border-bottom:none;font-size:13.5px;line-height:26px;text-align:center;font-weight:bold;color:#333">命令</div>
<div class="a" style="left:985px;top:700px;width:897px;height:220px;background:#fff;border-bottom-right-radius:7px"></div>
<div class="a" style="left:990px;top:705px;font-size:14.5px;line-height:18px;color:#8a8a8a">/home/273627548</div>
<div class="a" style="left:988px;top:724px;width:894px;height:1px;background:#d0d0d0"></div>
<div class="a" style="left:1537px;top:704px;width:43px;height:21px;background:#f8f8f8;border:1px solid #c6c6c6;font-size:13px;line-height:19px;text-align:center;color:#111">历史</div>
<svg class="a" style="left:1588px;top:706px" width="16" height="16" viewBox="0 0 16 16"><path d="M13.5 6A6 6 0 0 0 2.6 5M2.5 10A6 6 0 0 0 13.4 11" fill="none" stroke="#8a8a8a" stroke-width="2.2"/><path d="M0.5 2.5L5 6.5H0.5Z M15.5 13.5L11 9.5H15.5Z" fill="#8a8a8a"/></svg>
<svg class="a" style="left:1608px;top:706px" width="12" height="16" viewBox="0 0 12 16"><path d="M6 1L1.5 6H4.5V15H7.5V6H10.5Z" fill="#8a8a8a"/></svg>
<svg class="a" style="left:1624px;top:705px" width="17" height="16" viewBox="0 0 17 16"><path d="M7 0.5H10V6.5H13L8.5 11L4 6.5H7Z" fill="#8a8a8a"/><rect x="1" y="12" width="15" height="3.5" rx="1" fill="#8a8a8a"/></svg>
<svg class="a" style="left:1645px;top:705px" width="17" height="16" viewBox="0 0 17 16"><path d="M8.5 0.5L13 5H10V11H7V5H4Z" fill="#8a8a8a"/><rect x="1" y="12" width="15" height="3.5" rx="1" fill="#8a8a8a"/></svg>
<div class="a" style="left:1878px;top:704px;width:2px;height:18px;background:#9a9a9a"></div>

<!-- tree -->
<div class="a" style="left:985px;top:882px;width:169px;height:22px;background:#e9e9e9"></div>
<div class="a" style="left:1154px;top:728px;width:10px;height:191px;background:#f2f2f2"></div>
<div class="a" style="left:1154px;top:728px;width:10px;height:36px;background:#d6d6d6"></div>
<div class="a" style="left:1163px;top:815px;width:4px;height:14px;background:radial-gradient(circle,#9a9a9a 1.1px,transparent 1.4px) 0 0/4px 4.6px"></div>
<svg class="a" style="left:984px;top:733px" width="16" height="13" viewBox="0 0 16 13"><path d="M0.5 1.5Q0.5 0.5 1.5 0.5H6L7.5 2H14.5Q15.5 2 15.5 3V11.5Q15.5 12.5 14.5 12.5H1.5Q0.5 12.5 0.5 11.5Z" fill="#eeaa1a"/><path d="M0.5 4Q0.5 3.2 1.5 3.2H14.5Q15.5 3.2 15.5 4V11.5Q15.5 12.5 14.5 12.5H1.5Q0.5 12.5 0.5 11.5Z" fill="url(#fgF)"/></svg>
<div class="a" style="left:1004px;top:730px;font-size:15px;line-height:18px;color:#111">/</div>
<svg class="a" style="left:1003px;top:755px" width="16" height="13" viewBox="0 0 16 13"><path d="M0.5 1.5Q0.5 0.5 1.5 0.5H6L7.5 2H14.5Q15.5 2 15.5 3V11.5Q15.5 12.5 14.5 12.5H1.5Q0.5 12.5 0.5 11.5Z" fill="#f6d58a"/><path d="M0.5 4Q0.5 3.2 1.5 3.2H14.5Q15.5 3.2 15.5 4V11.5Q15.5 12.5 14.5 12.5H1.5Q0.5 12.5 0.5 11.5Z" fill="url(#fgL)"/></svg><div class="a" style="left:1022px;top:753px;font-size:13.5px;line-height:16px;color:#111">bin</div><svg class="a" style="left:1003px;top:777px" width="16" height="13" viewBox="0 0 16 13"><path d="M0.5 1.5Q0.5 0.5 1.5 0.5H6L7.5 2H14.5Q15.5 2 15.5 3V11.5Q15.5 12.5 14.5 12.5H1.5Q0.5 12.5 0.5 11.5Z" fill="#f6d58a"/><path d="M0.5 4Q0.5 3.2 1.5 3.2H14.5Q15.5 3.2 15.5 4V11.5Q15.5 12.5 14.5 12.5H1.5Q0.5 12.5 0.5 11.5Z" fill="url(#fgL)"/></svg><div class="a" style="left:1022px;top:776px;font-size:13.5px;line-height:16px;color:#111">boot</div><svg class="a" style="left:1003px;top:799px" width="16" height="13" viewBox="0 0 16 13"><path d="M0.5 1.5Q0.5 0.5 1.5 0.5H6L7.5 2H14.5Q15.5 2 15.5 3V11.5Q15.5 12.5 14.5 12.5H1.5Q0.5 12.5 0.5 11.5Z" fill="#f6d58a"/><path d="M0.5 4Q0.5 3.2 1.5 3.2H14.5Q15.5 3.2 15.5 4V11.5Q15.5 12.5 14.5 12.5H1.5Q0.5 12.5 0.5 11.5Z" fill="url(#fgL)"/></svg><div class="a" style="left:1022px;top:798px;font-size:13.5px;line-height:16px;color:#111">dev</div><svg class="a" style="left:1003px;top:821px" width="16" height="13" viewBox="0 0 16 13"><path d="M0.5 1.5Q0.5 0.5 1.5 0.5H6L7.5 2H14.5Q15.5 2 15.5 3V11.5Q15.5 12.5 14.5 12.5H1.5Q0.5 12.5 0.5 11.5Z" fill="#f6d58a"/><path d="M0.5 4Q0.5 3.2 1.5 3.2H14.5Q15.5 3.2 15.5 4V11.5Q15.5 12.5 14.5 12.5H1.5Q0.5 12.5 0.5 11.5Z" fill="url(#fgL)"/></svg><div class="a" style="left:1022px;top:820px;font-size:13.5px;line-height:16px;color:#111">etc</div><svg class="a" style="left:1003px;top:843px" width="16" height="13" viewBox="0 0 16 13"><path d="M0.5 1.5Q0.5 0.5 1.5 0.5H6L7.5 2H14.5Q15.5 2 15.5 3V11.5Q15.5 12.5 14.5 12.5H1.5Q0.5 12.5 0.5 11.5Z" fill="#f6d58a"/><path d="M0.5 4Q0.5 3.2 1.5 3.2H14.5Q15.5 3.2 15.5 4V11.5Q15.5 12.5 14.5 12.5H1.5Q0.5 12.5 0.5 11.5Z" fill="url(#fgL)"/></svg><div class="a" style="left:1022px;top:842px;font-size:13.5px;line-height:16px;color:#111">fs</div>
<svg class="a" style="left:986px;top:867px" width="10" height="7" viewBox="0 0 10 7"><path d="M1 1L5 5L9 1" fill="none" stroke="#888" stroke-width="1"/></svg>
<svg class="a" style="left:1003px;top:865px" width="16" height="13" viewBox="0 0 16 13"><path d="M0.5 1.5Q0.5 0.5 1.5 0.5H6L7.5 2H14.5Q15.5 2 15.5 3V11.5Q15.5 12.5 14.5 12.5H1.5Q0.5 12.5 0.5 11.5Z" fill="#eeaa1a"/><path d="M0.5 4Q0.5 3.2 1.5 3.2H14.5Q15.5 3.2 15.5 4V11.5Q15.5 12.5 14.5 12.5H1.5Q0.5 12.5 0.5 11.5Z" fill="url(#fgF)"/></svg>
<div class="a" style="left:1022px;top:864px;font-size:13.5px;line-height:16px;color:#111">home</div>
<svg class="a" style="left:1007px;top:888px" width="7" height="10" viewBox="0 0 7 10"><path d="M1 1L5 5L1 9" fill="none" stroke="#888" stroke-width="1"/></svg>
<svg class="a" style="left:1020px;top:886px" width="16" height="13" viewBox="0 0 16 13"><path d="M0.5 1.5Q0.5 0.5 1.5 0.5H6L7.5 2H14.5Q15.5 2 15.5 3V11.5Q15.5 12.5 14.5 12.5H1.5Q0.5 12.5 0.5 11.5Z" fill="#eeaa1a"/><path d="M0.5 4Q0.5 3.2 1.5 3.2H14.5Q15.5 3.2 15.5 4V11.5Q15.5 12.5 14.5 12.5H1.5Q0.5 12.5 0.5 11.5Z" fill="url(#fgF)"/></svg>
<div class="a" style="left:1040px;top:886px;font-size:13.5px;line-height:16px;color:#111">273627548</div>
<div class="a" style="left:985px;top:904px;width:169px;height:15px;overflow:hidden"><svg style="position:absolute;left:18px;top:4px" width="16" height="13" viewBox="0 0 16 13"><path d="M0.5 1.5Q0.5 0.5 1.5 0.5H6L7.5 2H14.5Q15.5 2 15.5 3V11.5Q15.5 12.5 14.5 12.5H1.5Q0.5 12.5 0.5 11.5Z" fill="#f6d58a"/><path d="M0.5 4Q0.5 3.2 1.5 3.2H14.5Q15.5 3.2 15.5 4V11.5Q15.5 12.5 14.5 12.5H1.5Q0.5 12.5 0.5 11.5Z" fill="url(#fgL)"/></svg><div class="a" style="left:37px;top:2px;font-size:13.5px;line-height:16px;color:#111">lib</div></div>

<!-- list -->
<div class="a" style="left:1169px;top:728px;width:713px;height:192px;border-left:1px solid #bfbfbf;border-top:1px solid #c8c8c8;background:#fff;border-bottom-right-radius:7px"></div>
<div class="a" style="left:1170px;top:753px;width:712px;height:1px;background:#e2e2e2"></div>
<div class="a" style="left:1170px;top:729px;width:159px;height:24px;font-size:13.5px;line-height:24px;text-align:center;color:#222;border-right:1px solid #e2e2e2">文件名&nbsp;&nbsp;&nbsp;</div>
<div class="a" style="left:1329px;top:729px;width:75px;height:24px;font-size:13.5px;line-height:24px;text-align:center;color:#222;border-right:1px solid #e2e2e2">大小</div>
<div class="a" style="left:1404px;top:729px;width:80px;height:24px;font-size:13.5px;line-height:24px;text-align:center;color:#222;border-right:1px solid #e2e2e2">类型</div>
<div class="a" style="left:1484px;top:729px;width:135px;height:24px;font-size:13.5px;line-height:24px;text-align:center;color:#222;border-right:1px solid #e2e2e2">修改时间</div>
<div class="a" style="left:1619px;top:729px;width:91px;height:24px;font-size:13.5px;line-height:24px;text-align:center;color:#222;border-right:1px solid #e2e2e2">权限</div>
<div class="a" style="left:1710px;top:729px;width:100px;height:24px;font-size:13.5px;line-height:24px;text-align:center;color:#222;border-right:1px solid #e2e2e2">用户/用户组</div>
<svg class="a" style="left:1272px;top:738px" width="11" height="7" viewBox="0 0 11 7"><path d="M1 6L5.5 1.5L10 6" fill="none" stroke="#bbb" stroke-width="1"/></svg>
<svg class="a" style="left:1174px;top:757px" width="16" height="13" viewBox="0 0 16 13"><path d="M0.5 1.5Q0.5 0.5 1.5 0.5H6L7.5 2H14.5Q15.5 2 15.5 3V11.5Q15.5 12.5 14.5 12.5H1.5Q0.5 12.5 0.5 11.5Z" fill="#eeaa1a"/><path d="M0.5 4Q0.5 3.2 1.5 3.2H14.5Q15.5 3.2 15.5 4V11.5Q15.5 12.5 14.5 12.5H1.5Q0.5 12.5 0.5 11.5Z" fill="url(#fgF)"/></svg>
<div class="a" style="left:1194px;top:755px;font-size:13.5px;line-height:20px;color:#111">.config</div>
<div class="a" style="left:1413px;top:755px;font-size:13.5px;line-height:20px;color:#111">文件夹</div>
<div class="a" style="left:1493px;top:754px;font-size:14.5px;line-height:20px;color:#111">2025/10/16 23:06</div>
<div class="a" style="left:1628px;top:755px;font-size:13.5px;letter-spacing:0.9px;line-height:20px;color:#111">drwx------</div>
<div class="a" style="left:1718px;top:754px;font-size:14.2px;line-height:20px;color:#111">273627548/...</div>
<div class="a" style="left:1170px;top:774px;width:640px;height:20px;background:#f6f6f6"></div>
<svg class="a" style="left:1174px;top:777px" width="16" height="13" viewBox="0 0 16 13"><path d="M0.5 1.5Q0.5 0.5 1.5 0.5H6L7.5 2H14.5Q15.5 2 15.5 3V11.5Q15.5 12.5 14.5 12.5H1.5Q0.5 12.5 0.5 11.5Z" fill="#eeaa1a"/><path d="M0.5 4Q0.5 3.2 1.5 3.2H14.5Q15.5 3.2 15.5 4V11.5Q15.5 12.5 14.5 12.5H1.5Q0.5 12.5 0.5 11.5Z" fill="url(#fgF)"/></svg>
<div class="a" style="left:1194px;top:775px;font-size:13.5px;line-height:20px;color:#111">aria2</div>
<div class="a" style="left:1413px;top:775px;font-size:13.5px;line-height:20px;color:#111">文件夹</div>
<div class="a" style="left:1493px;top:774px;font-size:14.5px;line-height:20px;color:#111">2025/11/24 15:22</div>
<div class="a" style="left:1628px;top:775px;font-size:13.5px;letter-spacing:0.9px;line-height:20px;color:#111">drwxr-xr-x</div>
<div class="a" style="left:1718px;top:774px;font-size:14.2px;line-height:20px;color:#111">273627548/...</div>
<svg class="a" style="left:1174px;top:797px" width="16" height="13" viewBox="0 0 16 13"><path d="M0.5 1.5Q0.5 0.5 1.5 0.5H6L7.5 2H14.5Q15.5 2 15.5 3V11.5Q15.5 12.5 14.5 12.5H1.5Q0.5 12.5 0.5 11.5Z" fill="#eeaa1a"/><path d="M0.5 4Q0.5 3.2 1.5 3.2H14.5Q15.5 3.2 15.5 4V11.5Q15.5 12.5 14.5 12.5H1.5Q0.5 12.5 0.5 11.5Z" fill="url(#fgF)"/></svg>
<div class="a" style="left:1194px;top:795px;font-size:13.5px;line-height:20px;color:#111">aria2.sock</div>
<div class="a" style="left:1413px;top:795px;font-size:13.5px;line-height:20px;color:#111">文件夹</div>
<div class="a" style="left:1493px;top:794px;font-size:14.5px;line-height:20px;color:#111">2025/11/24 15:12</div>
<div class="a" style="left:1718px;top:794px;font-size:14.2px;line-height:20px;color:#111">root/root</div>
<div class="a" style="left:1170px;top:814px;width:640px;height:20px;background:#f6f6f6"></div>
<svg class="a" style="left:1174px;top:817px" width="16" height="13" viewBox="0 0 16 13"><path d="M0.5 1.5Q0.5 0.5 1.5 0.5H6L7.5 2H14.5Q15.5 2 15.5 3V11.5Q15.5 12.5 14.5 12.5H1.5Q0.5 12.5 0.5 11.5Z" fill="#eeaa1a"/><path d="M0.5 4Q0.5 3.2 1.5 3.2H14.5Q15.5 3.2 15.5 4V11.5Q15.5 12.5 14.5 12.5H1.5Q0.5 12.5 0.5 11.5Z" fill="url(#fgF)"/></svg>
<div class="a" style="left:1194px;top:815px;font-size:13.5px;line-height:20px;color:#111">logs</div>
<div class="a" style="left:1413px;top:815px;font-size:13.5px;line-height:20px;color:#111">文件夹</div>
<div class="a" style="left:1493px;top:814px;font-size:14.5px;line-height:20px;color:#111">2025/09/25 22:14</div>
<div class="a" style="left:1628px;top:815px;font-size:13.5px;letter-spacing:0.9px;line-height:20px;color:#111">drwx------</div>
<div class="a" style="left:1718px;top:814px;font-size:14.2px;line-height:20px;color:#111">273627548/...</div>
<svg class="a" style="left:1174px;top:837px" width="16" height="13" viewBox="0 0 16 13"><path d="M0.5 1.5Q0.5 0.5 1.5 0.5H6L7.5 2H14.5Q15.5 2 15.5 3V11.5Q15.5 12.5 14.5 12.5H1.5Q0.5 12.5 0.5 11.5Z" fill="#eeaa1a"/><path d="M0.5 4Q0.5 3.2 1.5 3.2H14.5Q15.5 3.2 15.5 4V11.5Q15.5 12.5 14.5 12.5H1.5Q0.5 12.5 0.5 11.5Z" fill="url(#fgF)"/></svg>
<div class="a" style="left:1194px;top:835px;font-size:13.5px;line-height:20px;color:#111">qbt</div>
<div class="a" style="left:1413px;top:835px;font-size:13.5px;line-height:20px;color:#111">文件夹</div>
<div class="a" style="left:1493px;top:834px;font-size:14.5px;line-height:20px;color:#111">2025/07/26 21:59</div>
<div class="a" style="left:1628px;top:835px;font-size:13.5px;letter-spacing:0.9px;line-height:20px;color:#111">drwxr-xr-x</div>
<div class="a" style="left:1718px;top:834px;font-size:14.2px;line-height:20px;color:#111">273627548/...</div>
<div class="a" style="left:1170px;top:854px;width:640px;height:20px;background:#f6f6f6"></div>
<svg class="a" style="left:1176px;top:857px" width="12" height="15" viewBox="0 0 12 15"><path d="M0.5 14.5V0.5H8L11.5 4V14.5" fill="none" stroke="#777" stroke-width="1"/></svg>
<div class="a" style="left:1194px;top:855px;font-size:13.5px;line-height:20px;color:#111">.bash_history</div>
<div class="a" style="left:1329px;top:855px;width:73px;text-align:right;font-size:13.5px;line-height:20px;color:#111">631 B</div>
<div class="a" style="left:1413px;top:855px;font-size:13.5px;line-height:20px;color:#111">BASH_HI...</div>
<div class="a" style="left:1493px;top:854px;font-size:14.5px;line-height:20px;color:#111">2025/11/20 23:47</div>
<div class="a" style="left:1628px;top:855px;font-size:13.5px;letter-spacing:0.9px;line-height:20px;color:#111">-rw-------</div>
<div class="a" style="left:1718px;top:854px;font-size:14.2px;line-height:20px;color:#111">273627548/...</div>

<!-- disk table -->
<div class="a" style="left:800px;top:598px;width:177px;height:289px;border:1px solid #d6d6d6;background:#fff"></div>
<div class="a" style="left:965px;top:599px;width:12px;height:287px;background:#d9d9d9"></div>
<div class="a" style="left:801px;top:599px;width:73px;height:24px;border-right:1px solid #e0e0e0;border-bottom:1px solid #e0e0e0;font-size:13px;line-height:24px;text-align:center;color:#111">路径</div>
<div class="a" style="left:874px;top:599px;width:91px;height:24px;border-bottom:1px solid #e0e0e0;font-size:13px;line-height:24px;text-align:center;color:#111">可用/大小</div>
<div class="a" style="left:802px;top:624px;font-size:13px;line-height:20px;color:#111">/dev</div>
<div class="a" style="left:870px;top:624px;width:94px;text-align:right;font-size:12.5px;line-height:20px;color:#111">15.4G/15.4G</div>
<div class="a" style="left:801px;top:644px;width:164px;height:20px;background:#f5f5f5"></div>
<div class="a" style="left:955px;top:646px;width:9px;height:16px;background:#c9ddd5"></div>
<div class="a" style="left:802px;top:644px;font-size:13px;line-height:20px;color:#111">/run</div>
<div class="a" style="left:870px;top:644px;width:94px;text-align:right;font-size:12.5px;line-height:20px;color:#111">2.8G/3.1G</div>
<div class="a" style="left:947px;top:666px;width:17px;height:16px;background:#c9ddd5"></div>
<div class="a" style="left:802px;top:664px;font-size:13px;line-height:20px;color:#111">/</div>
<div class="a" style="left:870px;top:664px;width:94px;text-align:right;font-size:12.5px;line-height:20px;color:#111">47.6G/62.6G</div>
<div class="a" style="left:801px;top:684px;width:164px;height:20px;background:#f5f5f5"></div>
<div class="a" style="left:802px;top:684px;font-size:13px;line-height:20px;color:#111">/dev/shm</div>
<div class="a" style="left:870px;top:684px;width:94px;text-align:right;font-size:12.5px;line-height:20px;color:#111">15.4G/15.4G</div>
<div class="a" style="left:802px;top:704px;font-size:13px;line-height:20px;color:#111">/run/lock</div>
<div class="a" style="left:870px;top:704px;width:94px;text-align:right;font-size:12.5px;line-height:20px;color:#111">5M/5M</div>
<div class="a" style="left:801px;top:724px;width:164px;height:20px;background:#f5f5f5"></div>
<div class="a" style="left:914px;top:726px;width:50px;height:16px;background:#c9ddd5"></div>
<div class="a" style="left:802px;top:724px;font-size:13px;line-height:20px;color:#111">/sys/firmw...</div>
<div class="a" style="left:870px;top:724px;width:94px;text-align:right;font-size:12.5px;line-height:20px;color:#111">86K/128K</div>
<div class="a" style="left:955px;top:746px;width:9px;height:16px;background:#c9ddd5"></div>
<div class="a" style="left:802px;top:744px;font-size:13px;line-height:20px;color:#111">/boot/efi</div>
<div class="a" style="left:870px;top:744px;width:94px;text-align:right;font-size:12.5px;line-height:20px;color:#111">84M/92M</div>
<div class="a" style="left:801px;top:764px;width:164px;height:20px;background:#f5f5f5"></div>
<div class="a" style="left:892px;top:766px;width:72px;height:16px;background:#c9ddd5"></div>
<div class="a" style="left:802px;top:764px;font-size:13px;line-height:20px;color:#111">/vol2</div>
<div class="a" style="left:870px;top:764px;width:94px;text-align:right;font-size:12.5px;line-height:20px;color:#111">480.8G/1.8T</div>
<div class="a" style="left:949px;top:786px;width:15px;height:16px;background:#c9ddd5"></div>
<div class="a" style="left:802px;top:784px;font-size:13px;line-height:20px;color:#111">/vol1</div>
<div class="a" style="left:870px;top:784px;width:94px;text-align:right;font-size:12.5px;line-height:20px;color:#111">351.2G/412.9G</div>
<div class="a" style="left:801px;top:804px;width:164px;height:20px;background:#f5f5f5"></div>
<div class="a" style="left:802px;top:804px;font-size:13px;line-height:20px;color:#111">/vol02/100...</div>
<div class="a" style="left:870px;top:804px;width:94px;text-align:right;font-size:12.5px;line-height:20px;color:#111">1P/1P</div>
<div class="a" style="left:802px;top:824px;font-size:13px;line-height:20px;color:#111">/vol02/100...</div>
<div class="a" style="left:870px;top:824px;width:94px;text-align:right;font-size:12.5px;line-height:20px;color:#111">1P/1P</div>
<div class="a" style="left:801px;top:844px;width:164px;height:20px;background:#f5f5f5"></div>
<div class="a" style="left:802px;top:844px;font-size:13px;line-height:20px;color:#111">/vol02/100...</div>
<div class="a" style="left:870px;top:844px;width:94px;text-align:right;font-size:12.5px;line-height:20px;color:#111">1P/1P</div>
<div class="a" style="left:802px;top:864px;font-size:13px;line-height:20px;color:#111">/vol02/100...</div>
<div class="a" style="left:870px;top:864px;width:94px;text-align:right;font-size:12.5px;line-height:20px;color:#111">1P/1P</div>
<div class="a" style="left:799px;top:896px;width:180px;text-align:center;font-size:12.5px;line-height:18px;color:#555">激活/升级</div>

<!-- tray -->
<div class="a" style="left:1715px;top:933px;width:197px;height:21px;background:#fff;box-shadow:0 -1px 0 rgba(150,180,225,0.6)"></div>
<svg class="a" style="left:1686px;top:926px" width="36" height="28" viewBox="0 0 36 28"><defs><linearGradient id="sg" x1="0" y1="0" x2="0.3" y2="1"><stop offset="0" stop-color="#fb6a3a"/><stop offset="1" stop-color="#ef4a18"/></linearGradient></defs><g transform="rotate(-16 18 16)"><rect x="5" y="3" width="27" height="28" rx="4" fill="url(#sg)"/><path d="M26 9.5Q20 7 14 8Q9 9.5 11 13Q13 15.5 21 16Q26 17 24 20Q21 23 10 22" fill="none" stroke="#fff" stroke-width="4.2" stroke-linecap="round"/></g></svg>
<div class="a" style="left:1725px;top:935px;font-size:15px;line-height:18px;font-weight:bold;color:#0a6fd6">中</div>
<svg class="a" style="left:1751px;top:939px" width="14" height="12" viewBox="0 0 14 12"><circle cx="3.5" cy="3.5" r="2.2" fill="none" stroke="#0a6fd6" stroke-width="1.6"/><path d="M10.5 5.5Q12.5 5.5 12 8Q11.5 10.5 9 11.5" fill="none" stroke="#0a6fd6" stroke-width="2"/><circle cx="10.5" cy="6.5" r="1.6" fill="#0a6fd6"/></svg>
<svg class="a" style="left:1774px;top:938px" width="15" height="15" viewBox="0 0 15 15"><circle cx="7.5" cy="7.5" r="7.2" fill="#0a6fd6"/><circle cx="5" cy="5.5" r="1.1" fill="#fff"/><circle cx="10" cy="5.5" r="1.1" fill="#fff"/><path d="M3.5 8.5Q7.5 13 11.5 8.5Z" fill="#fff"/></svg>
<svg class="a" style="left:1799px;top:936px" width="12" height="18" viewBox="0 0 12 18"><rect x="3" y="0.5" width="6" height="11" rx="3" fill="#0a6fd6"/><path d="M1 8Q1 13.5 6 13.5Q11 13.5 11 8" fill="none" stroke="#0a6fd6" stroke-width="1.5"/><rect x="5.2" y="13.5" width="1.6" height="3.5" fill="#0a6fd6"/></svg>
<svg class="a" style="left:1821px;top:939px" width="16" height="13" viewBox="0 0 16 13"><rect x="0.8" y="0.8" width="14.4" height="11.4" rx="1.5" fill="none" stroke="#0a6fd6" stroke-width="1.5"/><path d="M3 3.5H13M3 6H13M4 9H12" stroke="#0a6fd6" stroke-width="1.3" stroke-dasharray="1.5 1"/></svg>
<svg class="a" style="left:1846px;top:937px" width="17" height="17" viewBox="0 0 17 17"><circle cx="6.5" cy="4" r="3.5" fill="#0a6fd6"/><path d="M0 16Q0 8.5 6.5 8.5Q10 8.5 11 10V16Z" fill="#0a6fd6"/><rect x="9" y="11" width="8" height="6" fill="#fff"/><path d="M10 12V15H12M12 11.5V16M14 12H16V16H14Z" fill="none" stroke="#0a6fd6" stroke-width="1"/></svg>
<svg class="a" style="left:1869px;top:937px" width="18" height="17" viewBox="0 0 18 17"><path d="M5 0.5L1 3L0.5 8L3.5 8.5V16.5H14.5V8.5L17.5 8L17 3L13 0.5Q9 4 5 0.5Z" fill="#f46a1c"/><path d="M7 12L14.5 5V16.5H9Z" fill="#ff9a3c" opacity="0.6"/></svg>
<svg class="a" style="left:1894px;top:938px" width="16" height="16" viewBox="0 0 16 16"><rect x="0" y="0" width="7" height="7" rx="2" fill="#0a6fd6"/><rect x="9" y="0" width="7" height="7" rx="2" fill="none" stroke="#0a6fd6" stroke-width="1.6"/><rect x="0" y="9" width="7" height="7" rx="2" fill="#0a6fd6"/><rect x="9" y="9" width="7" height="7" rx="2" fill="#0a6fd6"/></svg>

</body></html>
